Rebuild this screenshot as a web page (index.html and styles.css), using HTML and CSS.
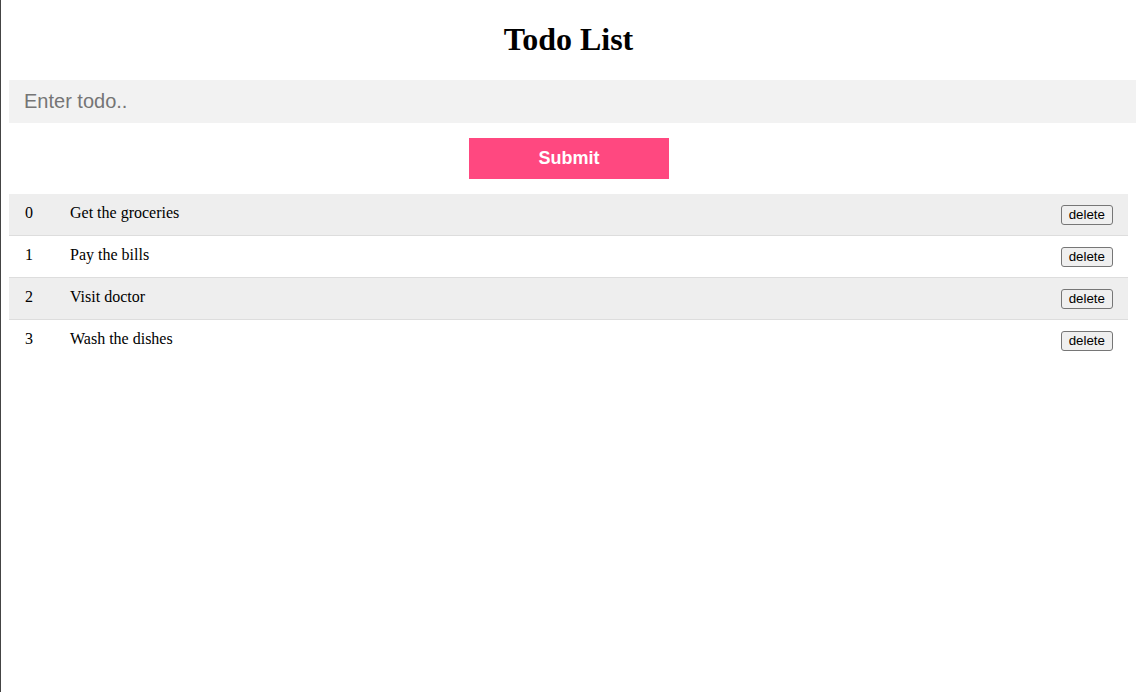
FILE: index.html
```html
<!DOCTYPE html>
<html>
<head>
<meta charset="utf-8">
<title>Todo List</title>
<link rel="stylesheet" href="styles.css">
</head>
<body>
<h1 class="title">Todo List</h1>
<form class="todo-form">
  <input class="todo-input" type="text" placeholder="Enter todo..">
  <button class="submit-btn" type="button">Submit</button>
</form>
<ul class="todo-list">
  <li class="todo-item"><span class="todo-index">0</span><span class="todo-text">Get the groceries</span><button class="delete-btn" type="button">delete</button></li>
  <li class="todo-item"><span class="todo-index">1</span><span class="todo-text">Pay the bills</span><button class="delete-btn" type="button">delete</button></li>
  <li class="todo-item"><span class="todo-index">2</span><span class="todo-text">Visit doctor</span><button class="delete-btn" type="button">delete</button></li>
  <li class="todo-item"><span class="todo-index">3</span><span class="todo-text">Wash the dishes</span><button class="delete-btn" type="button">delete</button></li>
</ul>
</body>
</html>
```
FILE: styles.css
```css
html {
  border-left: 1px solid #444;
  min-height: 100%;
  box-sizing: border-box;
}
body {
  margin: 0 0 8px 8px;
  padding-top: 0;
  font-family: "Liberation Serif", "Times New Roman", serif;
  font-size: 16px;
  color: #000;
}
.title {
  text-align: center;
  font-size: 32px;
  font-weight: bold;
  margin: 0 8px 0 0;
  padding: 21px 0 22px;
  line-height: 37px;
}
.todo-form {
  display: block;
  margin: 0;
}
.todo-input {
  display: block;
  box-sizing: border-box;
  width: 100%;
  border: none;
  outline: none;
  background: #f2f2f2;
  font-family: "Liberation Sans", Arial, sans-serif;
  font-size: 20px;
  line-height: 23px;
  height: 43px;
  padding: 10px 15px;
  margin: 0;
  color: #000;
}
.todo-input::placeholder {
  color: #757575;
}
.submit-btn {
  display: block;
  width: 200px;
  height: 41px;
  margin: 15px 0 0 460px;
  border: none;
  background: #ff4880;
  color: #fff;
  font-family: "Liberation Sans", Arial, sans-serif;
  font-size: 18px;
  font-weight: bold;
  padding: 0;
}
.todo-list {
  list-style: none;
  margin: 15px 8px 0 0;
  padding: 0;
}
.todo-item {
  display: flex;
  align-items: center;
  height: 41px;
  padding: 0 15px 0 16px;
  border-bottom: 1px solid #ddd;
}
.todo-item:nth-child(odd) {
  background: #eee;
}
.todo-item:last-child {
  border-bottom: none;
}
.todo-index {
  width: 45px;
  position: relative;
  top: -2px;
}
.todo-text {
  flex: 1;
  position: relative;
  top: -2px;
}
.delete-btn {
  font-family: "Liberation Sans", Arial, sans-serif;
  font-size: 13.33px;
  height: 20px;
  padding: 0 7px;
  background: #efefef;
  border: 1px solid #767676;
  border-radius: 3px;
  color: #000;
}
```
